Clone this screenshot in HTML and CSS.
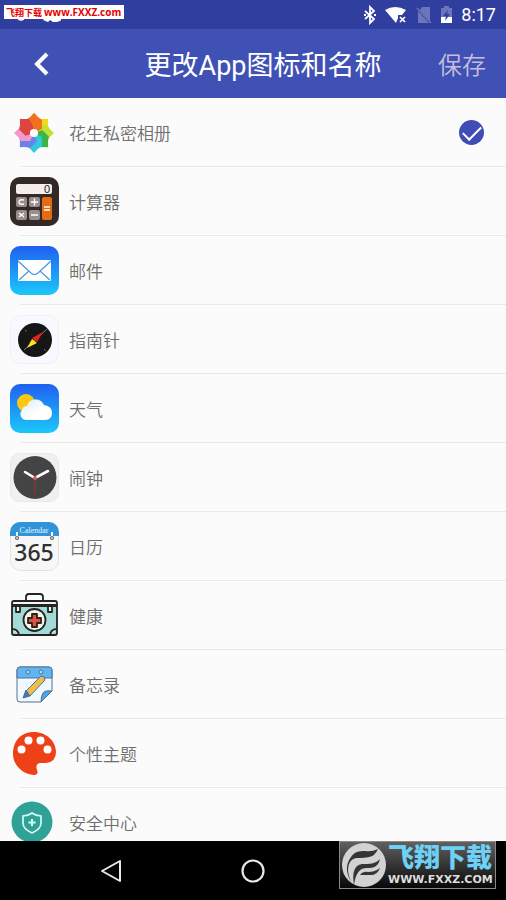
FILE: index.html
```html
<!DOCTYPE html>
<html lang="zh-CN">
  <head>
    <meta charset="UTF-8" />
    <meta name="viewport" content="width=device-width, initial-scale=1.0" />
    <title>更改App图标和名称</title>
    <link rel="stylesheet" href="styles.css">
  </head>
  <body>
    <div class="status-bar">
      <svg class="notify" width="44" height="14" viewBox="0 0 44 14">
        <circle cx="4" cy="9" r="3" fill="none" stroke="#fff" stroke-width="1.5" />
        <path d="M26 12l5-6 4 4 4-4 6 6-5 2h-4l-3-2-2 2z" fill="#fff" />
      </svg>
      <!-- bluetooth -->
      <svg width="14" height="20" viewBox="0 0 14 20">
        <path d="M2 6l9 8-4 4V2l4 4-9 8" fill="none" stroke="#fff" stroke-width="1.8" />
        <path d="M1 9h2v2H1zM11 9h2v2h-2z" fill="#fff" />
      </svg>
      <!-- wifi -->
      <svg width="24" height="20" viewBox="0 0 24 20">
        <path d="M1 5Q11-1 22 5l-4 5h-4v3l-2 5z" fill="#fff" />
        <path d="M16 12l5 5M21 12l-5 5" stroke="#fff" stroke-width="1.7" />
      </svg>
      <!-- no sim -->
      <svg width="18" height="20" viewBox="0 0 18 20">
        <path d="M7 2h8v14L5 5zM3 6l11 12H3z" fill="#6b76bd" />
        <path d="M2 3l14 15" stroke="#6b76bd" stroke-width="1.5" />
      </svg>
      <!-- battery -->
      <svg width="14" height="20" viewBox="0 0 14 20">
        <path d="M4 1h5v2h3v10H1V3h3z" fill="#6b76bd" />
        <path d="M1 12h11v6H1z" fill="#fff" />
        <path d="M8 5l-5 6h3l-1 5 5-7H7z" fill="#303f9f" />
      </svg>
      <span class="time">8:17</span>
    </div>

    <header class="toolbar">
      <button class="back" type="button" aria-label="返回">
        <svg width="18" height="26" viewBox="0 0 18 26">
          <path d="M15 3L5 13l10 10" fill="none" stroke="#fff" stroke-width="4" />
        </svg>
      </button>
      <h1 class="title">更改App图标和名称</h1>
      <button class="save" type="button">保存</button>
    </header>

    <main class="list">
      <label class="row">
        <svg class="icon" viewBox="0 0 49 49">
          <g transform="translate(24 25)">
            <path d="M-8-4V-13Q-4-15 0-20Q4-15 8-13V-4L0 0z" fill="#f2701d" />
            <path d="M-8-4V-13Q-4-15 0-20Q4-15 8-13V-4L0 0z" fill="#f6d51d" transform="rotate(45)" />
            <path d="M-8-4V-13Q-4-15 0-20Q4-15 8-13V-4L0 0z" fill="#c3e034" transform="rotate(90)" />
            <path d="M-8-4V-13Q-4-15 0-20Q4-15 8-13V-4L0 0z" fill="#3bb54a" transform="rotate(135)" />
            <path d="M-8-4V-13Q-4-15 0-20Q4-15 8-13V-4L0 0z" fill="#31c9dc" transform="rotate(180)" />
            <path d="M-8-4V-13Q-4-15 0-20Q4-15 8-13V-4L0 0z" fill="#6a83e8" transform="rotate(225)" />
            <path d="M-8-4V-13Q-4-15 0-20Q4-15 8-13V-4L0 0z" fill="#f29acb" transform="rotate(270)" />
            <path d="M-8-4V-13Q-4-15 0-20Q4-15 8-13V-4L0 0z" fill="#db4542" transform="rotate(315)" />
            <path d="M0-20Q4-15 8-13V-4L0 0Q0-7-5-14z" fill="#f2701d" />
            <circle r="4" fill="#fff" />
          </g>
        </svg>
        <span class="name">花生私密相册</span>
        <input class="pick" type="radio" name="app" checked>
      </label>

      <label class="row">
        <svg class="icon" viewBox="0 0 49 49">
          <rect width="49" height="49" rx="10" fill="#332a28" />
          <rect x="6" y="7" width="36" height="10" rx="2" fill="#f4efec" />
          <text class="calc-num" x="34" y="16">0</text>
          <g fill="#998e8b">
            <rect x="6" y="20" width="11" height="10" rx="2" />
            <rect x="19" y="20" width="11" height="10" rx="2" />
            <rect x="6" y="33" width="11" height="10" rx="2" />
            <rect x="19" y="33" width="11" height="10" rx="2" />
          </g>
          <rect x="32" y="20" width="10" height="23" rx="2" fill="#e56b13" />
          <path d="M34 30h6M34 33h6M21 25h7M24.500 21.500v7M21 38h7M9 36l5 4M14 36l-5 4M14 23q-5-1-5 2t5 2" fill="none" stroke="#fff" stroke-width="1.4" />
        </svg>
        <span class="name">计算器</span>
        <input class="pick" type="radio" name="app">
      </label>

      <label class="row">
        <svg class="icon" viewBox="0 0 49 49">
          <defs>
            <linearGradient id="sky" x2="0" y2="1">
              <stop offset="0" stop-color="#2060f2" />
              <stop offset="1" stop-color="#1bc8fa" />
            </linearGradient>
          </defs>
          <rect width="49" height="49" rx="10" fill="url(#sky)" />
          <rect x="8" y="14" width="33" height="21" rx="1" fill="#fff" />
          <path d="M8 15l13 12q3.500 3 7 0l13-12M9 34l10-9M40 34l-10-9" fill="none" stroke="#4b96dc" stroke-width="1.2" />
        </svg>
        <span class="name">邮件</span>
        <input class="pick" type="radio" name="app">
      </label>

      <label class="row">
        <svg class="icon" viewBox="0 0 49 49">
          <rect x=".5" y=".5" width="48" height="48" rx="10" fill="#f8f9fe" stroke="#eff0f5" />
          <circle cx="25" cy="25" r="17" fill="#161616" />
          <path d="M14 35L37 14M15 15l1.500 1.500M34 34l1.500 1.500" stroke="#777" />
          <path d="M33 17l-6 10-5-4z" fill="#e5231b" />
          <path d="M17 33l5-9 5 4z" fill="#ffe61c" />
        </svg>
        <span class="name">指南针</span>
        <input class="pick" type="radio" name="app">
      </label>

      <label class="row">
        <svg class="icon" viewBox="0 0 49 49">
          <defs>
            <linearGradient id="cloud" x2="1" y2="1">
              <stop offset="0" stop-color="#dcecf8" />
              <stop offset=".6" stop-color="#fff" />
            </linearGradient>
          </defs>
          <rect width="49" height="49" rx="10" fill="url(#sky)" />
          <circle cx="16" cy="19" r="9" fill="#fdc810" />
          <path d="M17 36a6 6 0 0 1-5-10q1-4 5-4a9 9 0 0 1 17-1q8 1 8 8t-7 7z" fill="url(#cloud)" />
        </svg>
        <span class="name">天气</span>
        <input class="pick" type="radio" name="app">
      </label>

      <label class="row">
        <svg class="icon" viewBox="0 0 49 49">
          <rect x=".5" y=".5" width="48" height="48" rx="9" fill="#f0f0f0" stroke="#e8e8e8" />
          <circle cx="25" cy="24.500" r="21.500" fill="#444" />
          <path d="M15 19l10 6 13-7" fill="none" stroke="#fff" stroke-width="2.600" stroke-linecap="round" />
          <path d="M25 24v17" stroke="#a52d3a" />
          <circle cx="25" cy="25" r="2" fill="#d75968" />
        </svg>
        <span class="name">闹钟</span>
        <input class="pick" type="radio" name="app">
      </label>

      <label class="row">
        <svg class="icon" viewBox="0 0 49 49">
          <rect x=".5" y=".5" width="48" height="48" rx="10" fill="#f7f7f7" stroke="#e2e2e2" />
          <path d="M0 14v-4A10 10 0 0 1 10 0h29a10 10 0 0 1 10 10v4z" fill="#3294d8" />
          <text class="cal-head" x="24" y="11">Calendar</text>
          <path d="M7 10v5M42 10v5" stroke="#fff" stroke-width="2" />
          <circle cx="7" cy="16" r="1.700" fill="#bbb" stroke="#777" />
          <circle cx="42" cy="16" r="1.700" fill="#bbb" stroke="#777" />
          <text class="cal-num" x="24" y="39">365</text>
        </svg>
        <span class="name">日历</span>
        <input class="pick" type="radio" name="app">
      </label>

      <label class="row">
        <svg class="icon" viewBox="0 0 49 49">
          <g stroke="#242424" stroke-width="1.800" stroke-linejoin="round">
            <path d="M16 11V6q0-3 3-3h11q3 0 3 3v5" fill="none" />
            <path d="M2 15h45v27q0 2-2 2H4q-2 0-2-2z" fill="#a3dcd7" />
            <path d="M2 14v-2q0-2 2-2h41q2 0 2 2v2z" fill="#f8f3e8" />
            <path d="M6 15h4v6H6zM38 15h4v6h-4z" fill="#f8f3e8" />
            <path d="M2 38q6 0 7 6M47 38q-6 0-7 6" fill="#f8f3e8" />
            <circle cx="24.500" cy="29" r="11" fill="#f8f3e8" />
            <path d="M22 23h5v4h4v5h-4v4h-5v-4h-4v-5h4z" fill="#e3503b" />
          </g>
        </svg>
        <span class="name">健康</span>
        <input class="pick" type="radio" name="app">
      </label>

      <label class="row">
        <svg class="icon" viewBox="0 0 49 49">
          <g stroke="#54718e" stroke-linejoin="round">
            <path d="M10 7h29q3 0 3 3v21L31 42H10q-3 0-3-3V10q0-3 3-3z" fill="#f0f9ff" />
            <path d="M7 18v-8q0-3 3-3h29q3 0 3 3v8z" fill="#5fb6f3" />
            <path d="M42 31L31 42q0-6 2-9t9-2z" fill="#4da5e8" />
            <circle cx="18" cy="12" r="2" fill="#a8dcff" />
            <circle cx="31" cy="12" r="2" fill="#a8dcff" />
            <path d="M15 32l5 4 15-16-1-3-3-1z" fill="#eebd4f" />
            <path d="M16 30l-3 8 7-2z" fill="#357fb8" />
          </g>
        </svg>
        <span class="name">备忘录</span>
        <input class="pick" type="radio" name="app">
      </label>

      <label class="row">
        <svg class="icon" viewBox="0 0 49 49">
          <path d="M24 3C10 3 3 13 3 25s11 21 22 21q4-1 2-5-2-6 3-7h6q10-1 10-11C46 12 36 3 24 3z" fill="#ef4118" />
          <g fill="#fff">
            <circle cx="11.500" cy="20.500" r="4" />
            <circle cx="18.500" cy="11.500" r="4" />
            <circle cx="30.500" cy="11.500" r="4" />
            <circle cx="37.500" cy="20.500" r="4" />
          </g>
        </svg>
        <span class="name">个性主题</span>
        <input class="pick" type="radio" name="app">
      </label>

      <label class="row">
        <svg class="icon" viewBox="0 0 49 49">
          <circle cx="22" cy="24" r="20.500" fill="#30a196" />
          <path d="M22 15q4 3 9 3v7q0 6-9 10-9-4-9-10v-7q5 0 9-3z" fill="none" stroke="#d9fffa" stroke-width="1.600" />
          <path d="M22 21v7M18.500 24.500h7" stroke="#d9fffa" stroke-width="2" />
        </svg>
        <span class="name">安全中心</span>
        <input class="pick" type="radio" name="app">
      </label>
    </main>

    <nav class="nav-bar">
      <button class="nav-btn" type="button" aria-label="返回">
        <svg width="24" height="26" viewBox="0 0 24 26">
          <path d="M21 3v20L3 13z" fill="none" stroke="#e8e8e8" stroke-width="2" stroke-linejoin="round" />
        </svg>
      </button>
      <button class="nav-btn" type="button" aria-label="主屏幕">
        <svg width="26" height="26" viewBox="0 0 26 26">
          <circle cx="13" cy="13" r="10.500" fill="none" stroke="#e8e8e8" stroke-width="2.200" />
        </svg>
      </button>
      <button class="nav-btn" type="button" aria-label="最近任务">
        <svg width="24" height="26" viewBox="0 0 24 26">
          <rect x="3" y="4" width="18" height="18" fill="none" stroke="#777" stroke-width="2" />
        </svg>
      </button>
    </nav>

    <div class="site-tag">飞翔下载 <span class="site-url">www.FXXZ.com</span></div>

    <div class="site-logo">
      <svg width="46" height="46" viewBox="0 0 46 46">
        <circle cx="24" cy="23" r="22" fill="#d2d2d2" />
        <path d="M12 41C5 28 8 17 17 16q8 0 12-1 6-1 9-8-6 3-13 2-10-1-14 6C4 24 7 34 12 41z" fill="#343434" />
        <path d="M14 43c-2-12 0-20 8-21 8 0 13 0 18-5-2 8-6 9-13 9-7 0-11 4-13 17z" fill="#343434" />
        <path d="M20 33q3-4 8-3 7 0 12-4-3 8-11 7-5 0-9 0z" fill="#343434" />
      </svg>
      <div class="logo-text">
        <span class="logo-name">飞翔下载</span>
        <span class="logo-url">WWW.FXXZ.COM</span>
      </div>
    </div>
  </body>
</html>
```
FILE: styles.css
```css
* {
  box-sizing: border-box;
}

body {
  margin: 0;
  height: 100vh;
  display: flex;
  flex-direction: column;
  position: relative;
  overflow: hidden;
  background: #fbfbfb;
  font-family: Roboto, "Noto Sans CJK SC", sans-serif;
}

button {
  padding: 0;
  border: none;
  background: none;
  font-family: inherit;
  cursor: pointer;
}

svg {
  display: block;
  flex: none;
}

/* 状态栏 */
.status-bar {
  flex: none;
  height: 29px;
  padding: 0 10px 0 17px;
  display: flex;
  align-items: center;
  gap: 7px;
  background: #303f9f;
  color: #fff;
}

.notify {
  margin-right: auto;
}

.time {
  font-size: 18px;
  line-height: 29px;
}

/* 标题栏 */
.toolbar {
  flex: none;
  height: 69px;
  display: flex;
  align-items: center;
  background: #3f51b5;
}

.back {
  width: 89px;
  height: 100%;
  padding-left: 32px;
}

.title {
  flex: 1;
  margin: 0;
  text-align: center;
  color: #fff;
  font-size: 27px;
  font-weight: 400;
  white-space: nowrap;
}

.save {
  width: 69px;
  height: 100%;
  padding-right: 20px;
  color: #c5bfdb;
  font-size: 24px;
  font-weight: 350;
  text-align: right;
  white-space: nowrap;
}

/* 图标列表 */
.list {
  flex: 1;
  min-height: 0;
  overflow-y: auto;
  scrollbar-width: none;
}

.row {
  height: 69px;
  padding: 0 22px 0 10px;
  display: flex;
  align-items: center;
  gap: 10px;
  background: linear-gradient(#e9e9e9, #e9e9e9) 20px 100% / 100% 1px no-repeat;
  cursor: pointer;
}

.icon {
  width: 49px;
  height: 49px;
}

.name {
  flex: 1;
  color: #6e6e6e;
  font-size: 17px;
  font-weight: 350;
}

.pick {
  appearance: none;
  width: 25px;
  height: 25px;
  margin: 0;
  border-radius: 50%;
  display: grid;
  place-items: center;
}

.pick:checked {
  background: #3f4db5;
}

.pick:checked::before {
  content: "";
  width: 16px;
  height: 8px;
  margin-bottom: 4px;
  border-left: 2px solid #fff;
  border-bottom: 2px solid #fff;
  transform: rotate(-45deg);
}

.calc-num {
  font: 11px "Liberation Sans", sans-serif;
  fill: #222;
}

.cal-head {
  font: 8px "Liberation Serif", serif;
  fill: #e3f4ff;
  text-anchor: middle;
}

.cal-num {
  font: 500 23px "Noto Sans", sans-serif;
  fill: #2f2f2f;
  text-anchor: middle;
}

/* 底部导航 */
.nav-bar {
  flex: none;
  height: 59px;
  padding: 0 40px;
  display: flex;
  background: #000;
}

.nav-btn {
  flex: 1;
  display: flex;
  align-items: center;
  justify-content: center;
}

/* 站点标记 */
.site-tag {
  position: absolute;
  top: 5px;
  left: 4px;
  height: 14px;
  padding: 0 3px 0 2px;
  background: #fff;
  color: #e60000;
  font: bold 9px/14px "Noto Sans CJK SC", sans-serif;
  white-space: nowrap;
}

.site-url {
  font-size: 10px;
  font-family: "Open Sans", sans-serif;
}

.site-logo {
  position: absolute;
  right: 10px;
  bottom: 11px;
  width: 157px;
  height: 48px;
  display: flex;
  align-items: center;
  gap: 2px;
  border: 1px solid #8a8a8a;
  background: linear-gradient(#606060, #080808);
}

.logo-text {
  display: flex;
  flex-direction: column;
  white-space: nowrap;
}

.logo-name {
  color: #6fd0f5;
  font-size: 26px;
  line-height: 30px;
  font-weight: 900;
}

.logo-url {
  color: #ddd;
  font: bold 11px/14px "DejaVu Sans", sans-serif;
}
```
